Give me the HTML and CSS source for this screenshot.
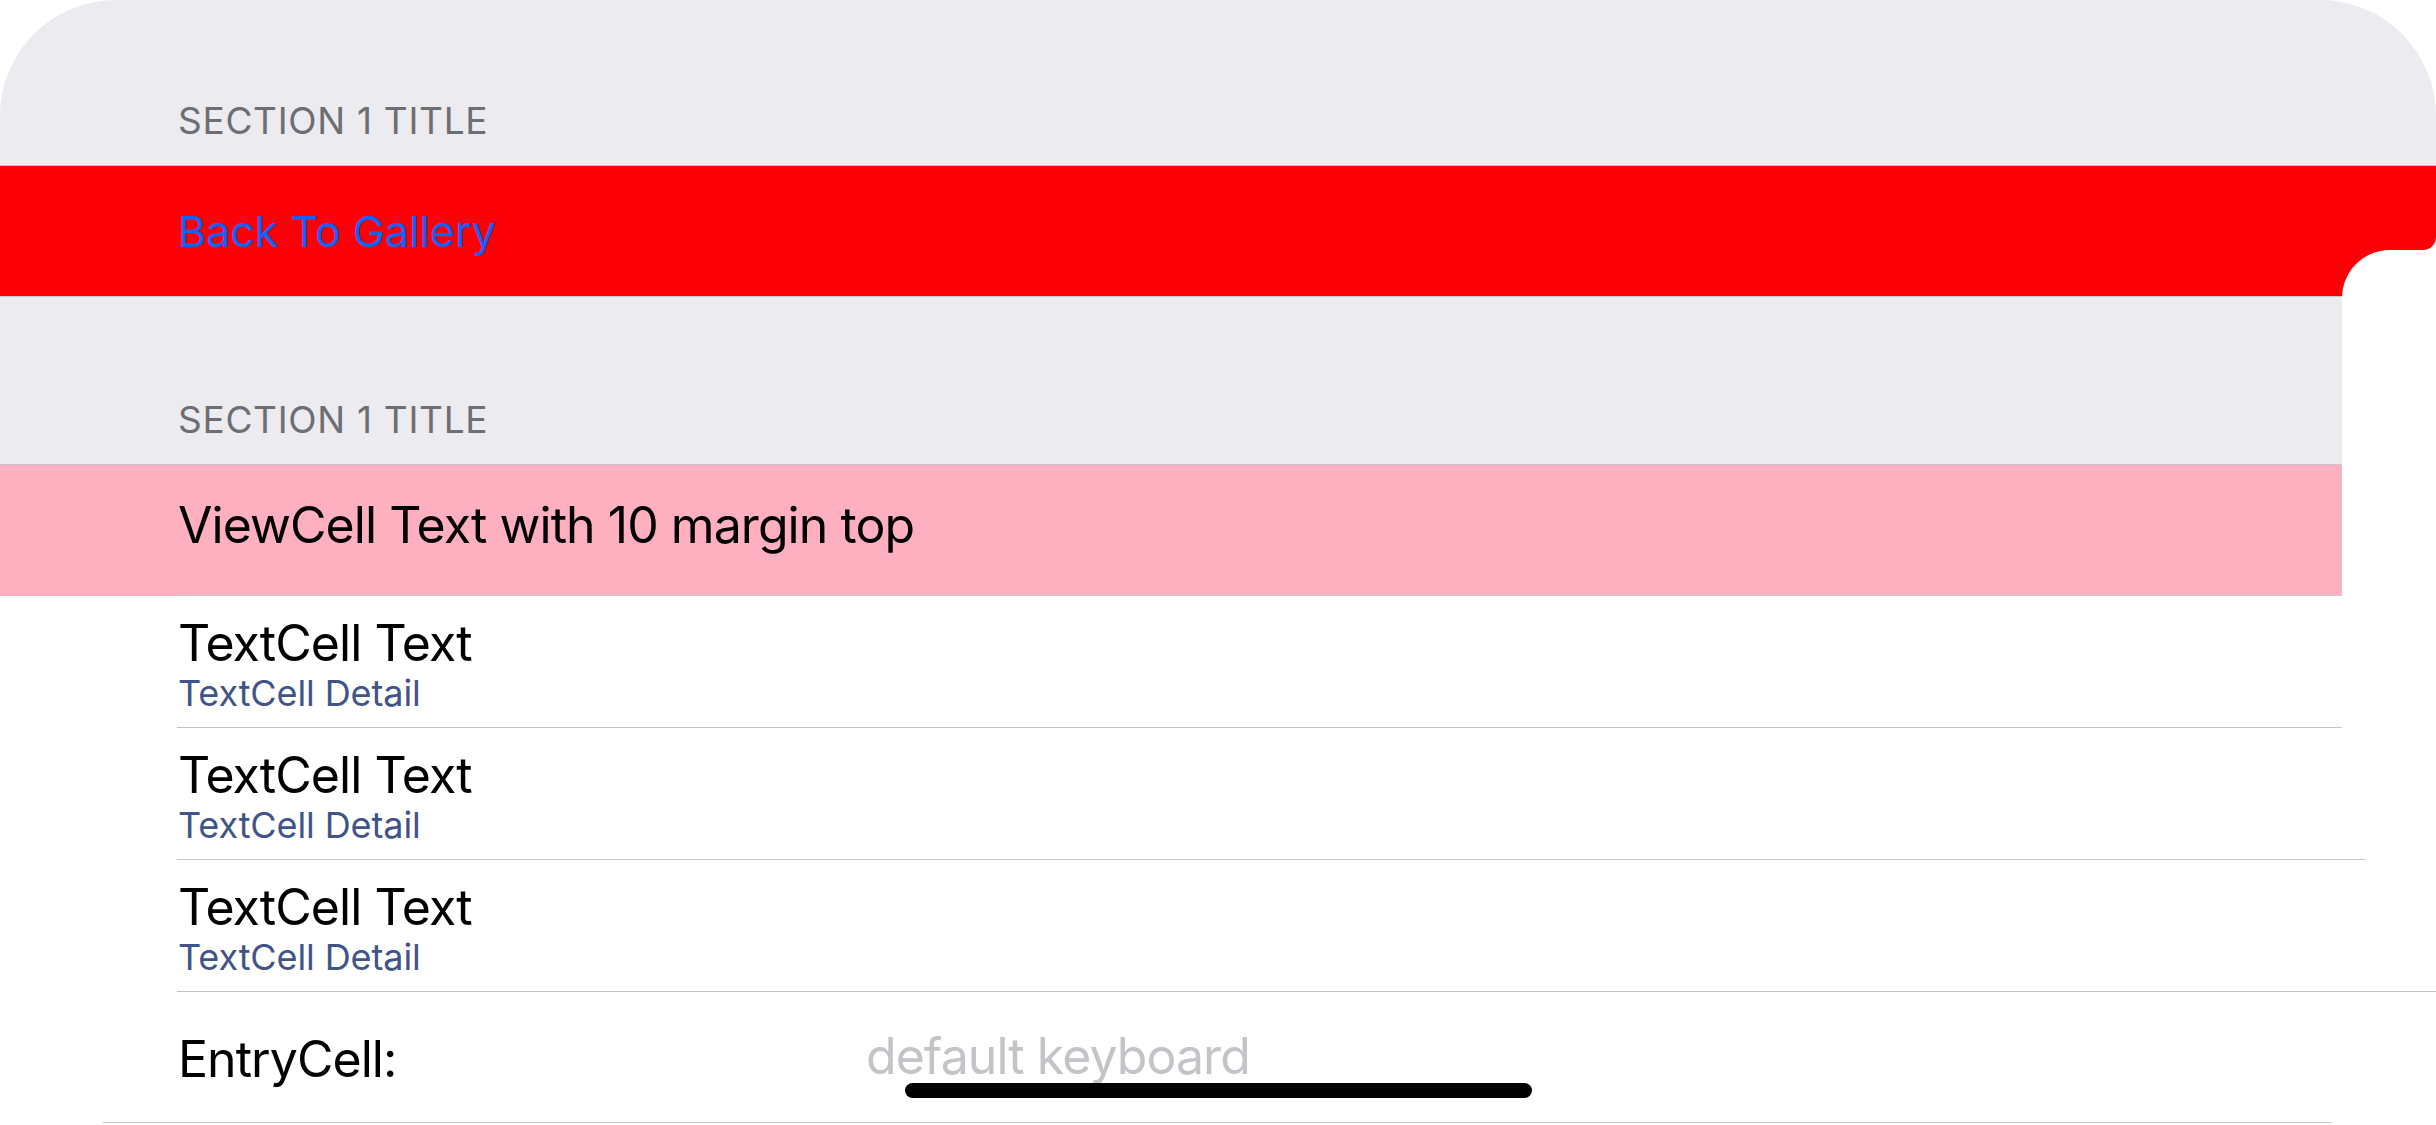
FILE: index.html
```html
<!DOCTYPE html>
<html lang="en">
<head>
<meta charset="utf-8">
<title>TableView Gallery</title>
<link rel="stylesheet" href="styles.css">
</head>
<body>
<div class="screen">
  <section class="group">
    <div class="header"><span class="header-title">SECTION 1 TITLE</span></div>
    <div class="cell cell-red">
      <div class="cell-body red-body"><span class="button-text">Back To Gallery</span></div>
      <div class="sep"></div>
    </div>
  </section>
  <section class="group">
    <div class="header header-second"><span class="header-title">SECTION 1 TITLE</span></div>
    <div class="cell cell-pink">
      <div class="cell-body pink-body"><span class="main-text">ViewCell Text with 10 margin top</span></div>
      <div class="sep sep-inset sep-short"></div>
    </div>
    <div class="cell">
      <div class="cell-body text-body"><span class="main-text">TextCell Text</span><span class="detail-text">TextCell Detail</span></div>
      <div class="sep sep-inset sep-short"></div>
    </div>
    <div class="cell">
      <div class="cell-body text-body"><span class="main-text">TextCell Text</span><span class="detail-text">TextCell Detail</span></div>
      <div class="sep sep-inset sep-mid sep-over"></div>
    </div>
    <div class="cell">
      <div class="cell-body text-body"><span class="main-text">TextCell Text</span><span class="detail-text">TextCell Detail</span></div>
      <div class="sep sep-inset sep-over"></div>
    </div>
    <div class="cell">
      <div class="cell-body entry-body"><span class="main-text">EntryCell:</span><span class="placeholder">default keyboard</span></div>
      <div class="sep sep-entry"></div>
    </div>
  </section>
  <svg class="edge-mask" width="94" height="889" viewBox="0 0 94 889" aria-hidden="true">
    <path d="M0 889 L0 62 A48 48 0 0 1 48 14 L81 14 A13 13 0 0 0 94 1 L94 889 Z" fill="#ffffff"/>
  </svg>
  <div class="home-indicator"></div>
</div>
</body>
</html>
```
FILE: styles.css
```css
html, body {
  margin: 0;
  padding: 0;
  background: #ffffff;
}

body {
  width: 2436px;
  height: 1125px;
  overflow: hidden;
  font-family: Inter, "Noto Sans", "Liberation Sans", sans-serif;
  color: #000000;
}

.screen {
  position: relative;
  width: 2436px;
  height: 1125px;
  overflow: hidden;
  border-radius: 116px 116px 0 0;
  display: flex;
  flex-direction: column;
}

.group {
  display: flex;
  flex-direction: column;
}

.header {
  box-sizing: content-box;
  height: 139px;
  padding: 0 0 26px 178px;
  background: #ebebf0;
  border-bottom: 1px solid #c4c4c8;
  display: flex;
  align-items: flex-end;
}

.header-second {
  height: 141px;
}

.header-title {
  font-size: 37px;
  line-height: 1;
  color: #6d6d72;
  letter-spacing: 0.7px;
}

.cell {
  display: flex;
  flex-direction: column;
  background: #ffffff;
}

.cell-body {
  box-sizing: border-box;
  height: 131px;
  padding-left: 178px;
  display: flex;
  flex-direction: column;
  align-items: flex-start;
}

.cell-red {
  background: #fc0007;
}

.red-body {
  height: 130px;
  padding-top: 44px;
}

.button-text {
  font-size: 43px;
  line-height: 1;
  color: #1062fe;
}

.cell-pink {
  background: #feb0c1;
}

.pink-body {
  height: 130px;
  padding-top: 35px;
}

.main-text {
  font-size: 50px;
  line-height: 1;
  letter-spacing: -0.95px;
  color: #000000;
}

.text-body {
  padding-top: 22px;
}

.detail-text {
  margin-top: 7px;
  font-size: 36px;
  line-height: 1;
  letter-spacing: -0.1px;
  color: #405489;
}

.entry-body {
  height: 130px;
  padding-top: 42px;
  display: grid;
  grid-template-columns: 688px 1fr;
  align-items: start;
}

.placeholder {
  margin-top: -3px;
  font-size: 50px;
  line-height: 1;
  letter-spacing: -0.95px;
  color: #c3c3c8;
}

.sep {
  height: 1px;
  background: #c6c6c8;
}

.sep-over {
  position: relative;
  z-index: 3;
}

.sep-inset {
  margin-left: 177px;
}

.sep-short {
  margin-right: 94px;
}

.sep-mid {
  margin-right: 71px;
}

.sep-entry {
  margin-left: 103px;
  margin-right: 104px;
}

.edge-mask {
  position: absolute;
  left: 2342px;
  top: 236px;
  z-index: 2;
  display: block;
}

.home-indicator {
  position: absolute;
  left: 50%;
  top: 1083px;
  width: 627px;
  height: 15px;
  margin-left: -313px;
  border-radius: 8px;
  background: #000000;
  z-index: 4;
}
```
